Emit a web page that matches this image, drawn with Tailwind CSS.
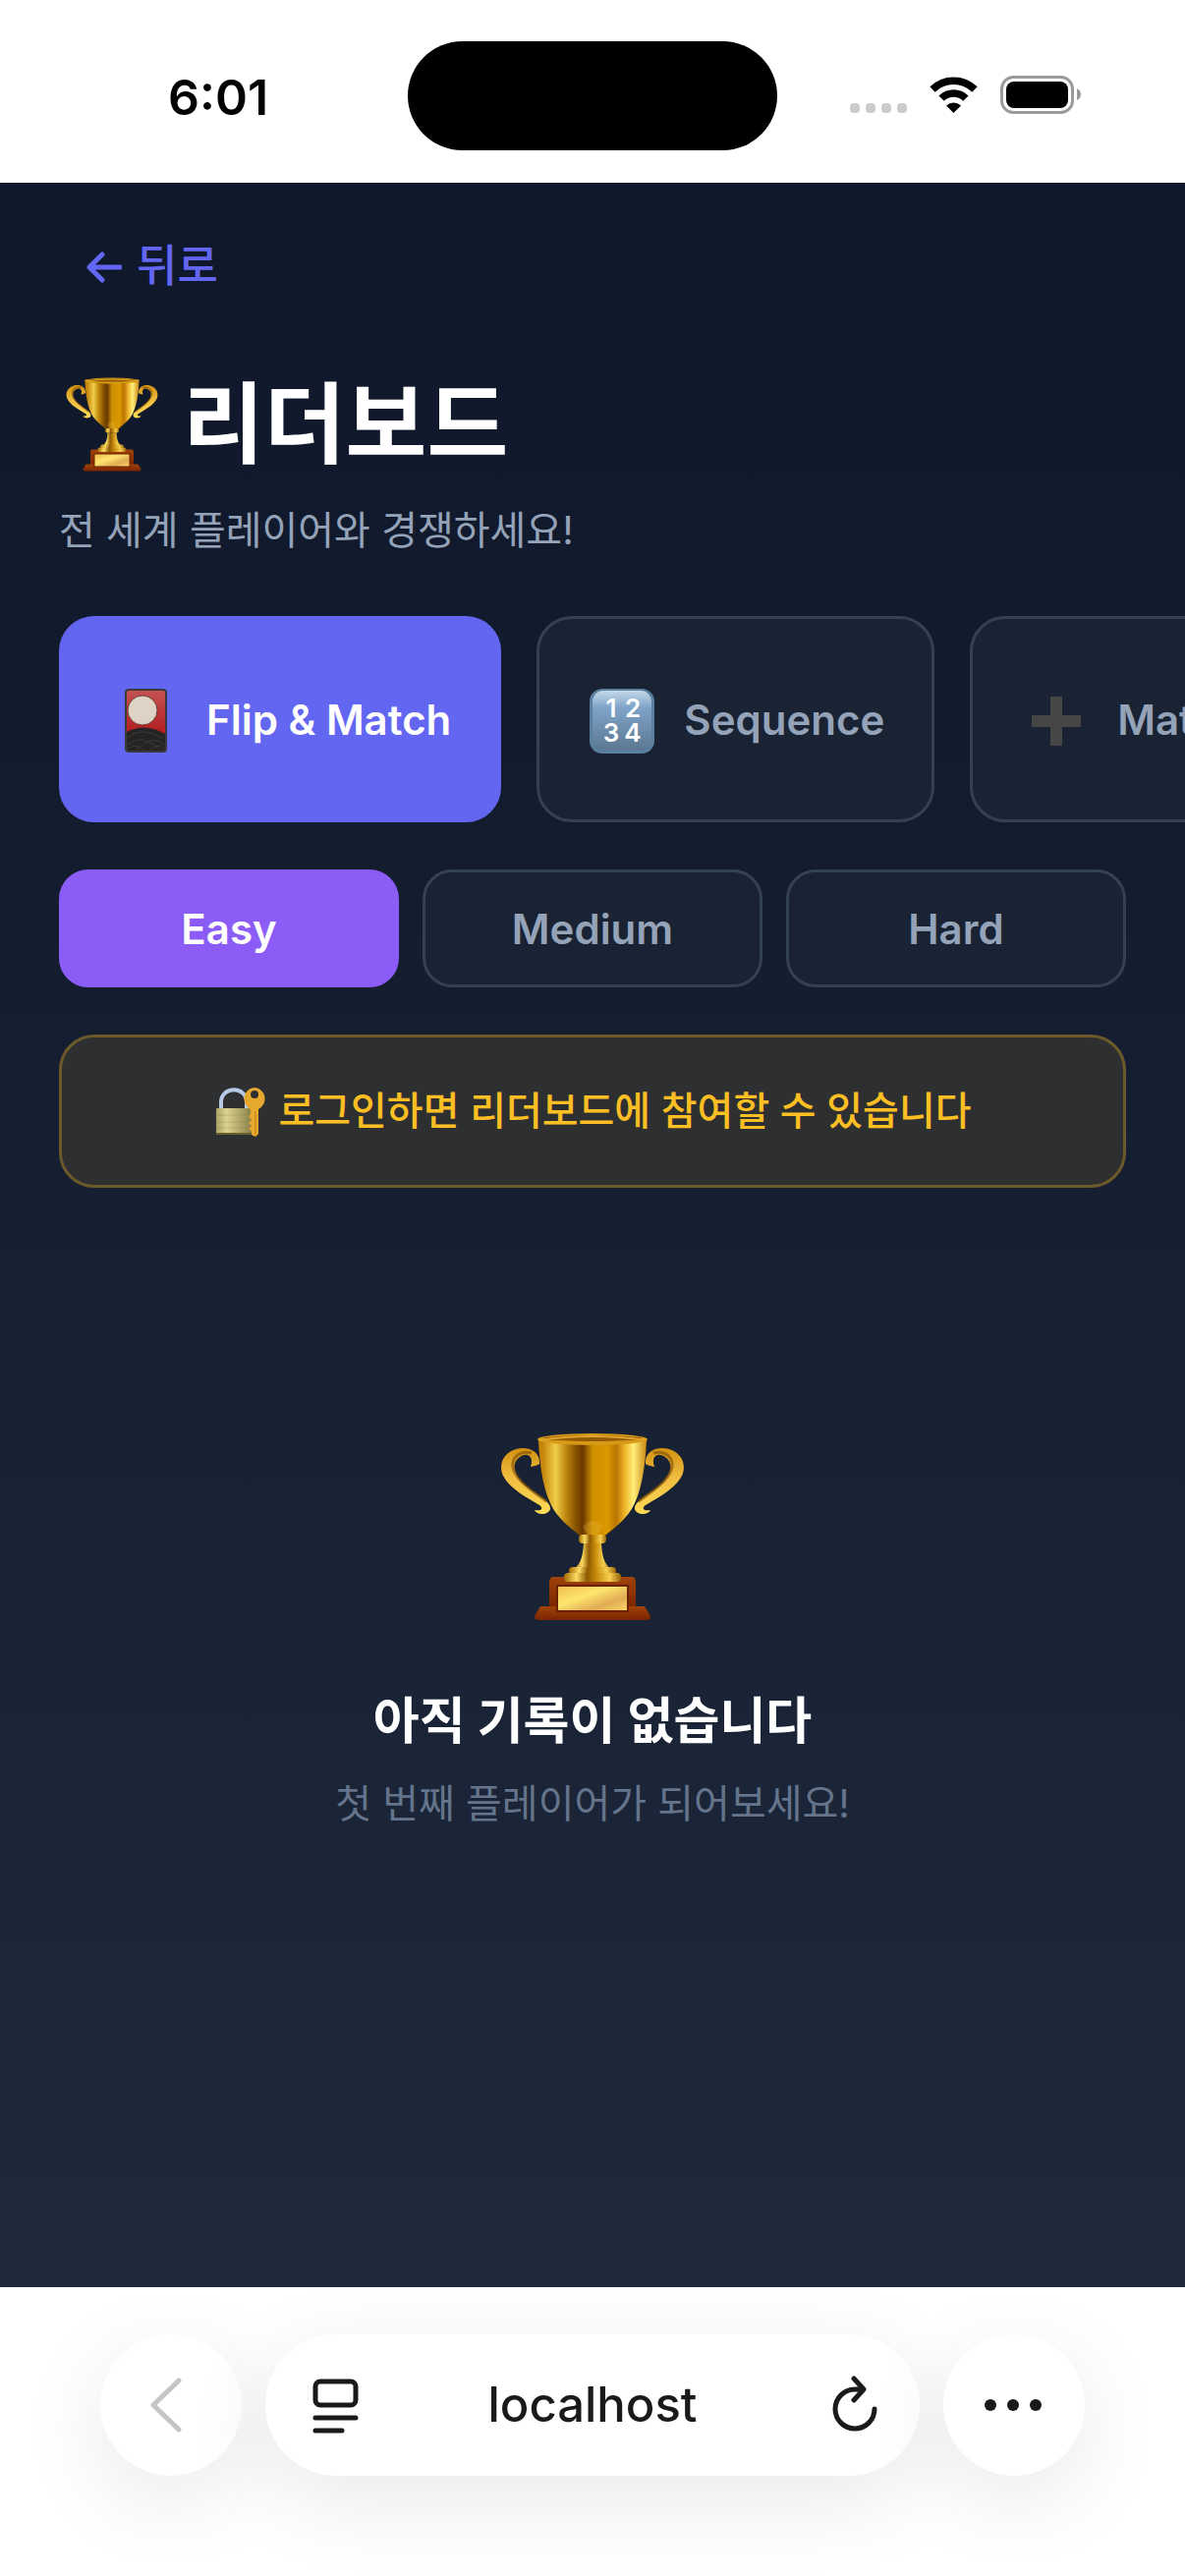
<!DOCTYPE html>
<html lang="ko">
<head>
<meta charset="utf-8">
<meta name="viewport" content="width=device-width, initial-scale=1">
<title>리더보드</title>
<script src="https://cdn.jsdelivr.net/npm/@tailwindcss/browser@4"></script>
</head>
<body class="flex min-h-screen flex-col overflow-x-hidden bg-white font-['Inter','Noto_Sans_CJK_KR',sans-serif]">
<svg class="absolute size-0" aria-hidden="true">
  <defs>
    <linearGradient id="cup" x1="0" x2="1" y1="0" y2="0">
      <stop offset="0" stop-color="#c07c06"/><stop offset=".05" stop-color="#c98a10"/><stop offset=".16" stop-color="#f0cd4a"/><stop offset=".25" stop-color="#c08a10"/><stop offset=".34" stop-color="#8a5500"/><stop offset=".41" stop-color="#6b3800"/><stop offset=".5" stop-color="#cf9000"/><stop offset=".64" stop-color="#da9800"/><stop offset=".72" stop-color="#b87400"/><stop offset=".8" stop-color="#f0b52c"/><stop offset=".88" stop-color="#fff07a"/><stop offset="1" stop-color="#c98512"/>
    </linearGradient>
    <linearGradient id="stem" x1="0" x2="1" y1="0" y2="0">
      <stop offset="0" stop-color="#a66a04"/><stop offset=".22" stop-color="#fbdc62"/><stop offset=".4" stop-color="#8f5a02"/><stop offset=".58" stop-color="#c98d0c"/><stop offset=".8" stop-color="#f6cf50"/><stop offset="1" stop-color="#9a6204"/>
    </linearGradient>
    <linearGradient id="handle" x1="0" x2="0" y1="0" y2="1">
      <stop offset="0" stop-color="#d29210"/><stop offset=".45" stop-color="#f0bc40"/><stop offset="1" stop-color="#ffdc55"/>
    </linearGradient>
    <linearGradient id="wood" x1="0" x2="0" y1="0" y2="1">
      <stop offset="0" stop-color="#a04208"/><stop offset="1" stop-color="#7a2400"/>
    </linearGradient>
    <linearGradient id="plate" x1="0" x2="1" y1="0" y2="1">
      <stop offset="0" stop-color="#eebb4c"/><stop offset=".4" stop-color="#ffe56e"/><stop offset=".7" stop-color="#e0ac55"/><stop offset="1" stop-color="#ffd866"/>
    </linearGradient>
    <symbol id="trophy" viewBox="0 0 186 192">
      <g id="trophy-handle">
        <path d="M39 32C40 18 26 14 15 17C2 21 -3 33 2 44C9 58 28 67 39 74C43 77 42 80 34 79C36 84 48 85 50 78C51 70 36 64 26 55C12 44 10 31 19 25C26 20 34 24 30 35C35 34 38 33 39 32Z" fill="url(#handle)"/>
        <path d="M31 21C18 18 11 26 12 35C14 48 32 60 46 70" fill="none" stroke="#7c4a04" stroke-width="3" opacity=".6"/>
      </g>
      <use href="#trophy-handle" transform="translate(186 0) scale(-1 1)"/>
      <path d="M38 9C40 48 47 74 60 87C67 95 76 101 81 106H105C110 101 119 95 126 87C139 74 146 48 148 9Z" fill="url(#cup)"/>
      <path d="M83 96Q93 84 103 96L98 104H88Z" fill="#f2bf45" opacity=".25"/>
      <ellipse cx="93" cy="7" rx="56" ry="6" fill="#d79a17"/>
      <ellipse cx="93" cy="6" rx="50" ry="3" fill="#925a04"/>
      <path d="M38 8Q93 0 148 8" fill="none" stroke="#e0a52c" stroke-width="2"/>
      <path d="M84 113H102C103 125 104 133 112 139H74C82 133 83 125 84 113Z" fill="url(#stem)"/>
      <rect x="79" y="104" width="28" height="9" rx="4" fill="url(#stem)"/>
      <rect x="69" y="137" width="48" height="8" rx="4" fill="url(#stem)"/>
      <path d="M52 147H134Q137 148 137 153V180H49V153Q49 148 52 147Z" fill="url(#wood)"/>
      <rect x="64" y="143" width="58" height="9" rx="4" fill="url(#stem)"/>
      <path d="M40 177H146L152 187Q152 191 148 191H38Q34 191 34 187Z" fill="url(#wood)"/>
      <path d="M57 156H129V182H57Z" fill="url(#plate)" stroke="#6b2000" stroke-width="2"/>
    </symbol>
  </defs>
</svg>

<header class="grid h-[186px] grid-cols-[1fr_376px_1fr] items-center pb-2" aria-label="상태 표시줄">
  <time class="pl-[171px] pt-5 text-[50px] leading-[60px] font-semibold text-black">6:01</time>
  <div class="mt-4 h-[111px] rounded-full bg-black"></div>
  <svg class="ml-[73px] mt-4 h-[40px] w-[236px]" viewBox="864 78 236 40" aria-label="Wi-Fi, 배터리">
    <g fill="#cbcbcb"><rect x="865" y="106" width="10" height="10" rx="4"/><rect x="881" y="106" width="10" height="10" rx="4"/><rect x="897" y="106" width="10" height="10" rx="4"/><rect x="913" y="106" width="10" height="10" rx="4"/></g>
    <path d="M970.500 116L978 108.500A11 11 0 0 0 963 108.500Z"/>
    <path d="M958.100 101.100A17.500 17.500 0 0 1 982.900 101.100M949 92A30.500 30.500 0 0 1 992 92" fill="none" stroke="#000" stroke-width="7.500"/>
    <rect x="1019.500" y="79.500" width="72" height="36" rx="12" fill="none" stroke="#9b9b9b" stroke-width="3"/>
    <rect x="1024" y="84" width="63" height="27" rx="8"/>
    <path d="M1096 91Q1100 93 1100 97T1096 103Z" fill="#9b9b9b"/>
  </svg>
</header>

<main class="flex grow flex-col bg-linear-to-b from-[#0f172a] to-[#1e293b] px-[60px] pt-[48px]">
  <a href="#" class="flex h-[74px] items-center gap-[15px] self-start px-7 text-[45px] leading-[66px] font-medium text-[#6366f1]">
    <svg class="h-[36px] w-[36px]" viewBox="0 0 36 36" fill="none" stroke="currentColor" stroke-width="5" stroke-linecap="round" stroke-linejoin="round"><path d="M34 19H4M16 6L3 19L16 32"/></svg>
    <span>뒤로</span>
  </a>

  <h1 class="mt-[67px] flex h-[114px] items-center gap-[24px] pl-[6px] text-[90px] leading-[114px] font-bold text-white">
    <svg class="h-[96px] w-[96px]" role="img" aria-label="트로피"><use href="#trophy"/></svg>
    <span>리더보드</span>
  </h1>
  <p class="mt-[21px] text-[40px] leading-[60px] text-[#94a3b8]">전 세계 플레이어와 경쟁하세요!</p>

  <nav class="-mr-[60px] mt-[57px] flex gap-[36px] overflow-hidden text-[42px] font-semibold whitespace-nowrap text-[#94a3b8]" aria-label="게임">
    <button class="flex h-[210px] shrink-0 items-center gap-[27px] rounded-[36px] border-3 border-[#6366f1] bg-[#6366f1] px-[48px] text-white">
      <svg class="h-[72px] w-[72px]" viewBox="0 0 72 72">
        <defs><linearGradient id="red" x1="0" x2="0" y1="0" y2="1"><stop offset="0" stop-color="#c45252"/><stop offset="1" stop-color="#b01418"/></linearGradient></defs>
        <rect x="16" y="5" width="43" height="65" rx="4" fill="#393a3a"/>
        <rect x="18" y="7" width="39" height="50" rx="2" fill="url(#red)"/>
        <circle cx="34" cy="27" r="15" fill="#dfd3c5" stroke="#6c4037"/>
        <path d="M18 49Q37 39 57 51V66Q57 68 55 68H20Q18 68 18 66Z" fill="#252423"/>
        <path d="M18 55Q34 42 55 56M18 62Q34 50 50 66M28 67Q44 51 57 62M18 67Q26 59 36 68M42 67Q48 60 57 66" fill="none" stroke="#3b3a38"/>
      </svg>
      <span>Flip &amp; Match</span>
    </button>
    <button class="flex h-[210px] shrink-0 items-center gap-[27px] rounded-[36px] border-3 border-[#334155] bg-[#192334] px-[48px]">
      <svg class="h-[72px] w-[72px]" viewBox="0 0 72 72">
        <defs><linearGradient id="key" x1="0" x2="0" y1="0" y2="1"><stop offset="0" stop-color="#c5d9ea"/><stop offset=".28" stop-color="#7fa4c9"/><stop offset="1" stop-color="#5b7791"/></linearGradient></defs>
        <rect x="3" y="5" width="66" height="66" rx="13" fill="#5b7f9f"/>
        <rect x="6" y="7" width="60" height="61" rx="11" fill="url(#key)"/>
        <g fill="#fff" font-family="Inter" font-size="26" font-weight="600" text-anchor="middle"><text x="25" y="34">1</text><text x="47" y="34">2</text><text x="25" y="59">3</text><text x="47" y="59">4</text></g>
      </svg>
      <span>Sequence</span>
    </button>
    <button class="flex h-[210px] shrink-0 items-center gap-[27px] rounded-[36px] border-3 border-[#334155] bg-[#192334] px-[48px]">
      <svg class="h-[72px] w-[72px]" viewBox="0 0 72 72"><path d="M31 13H43V32H62V44H43V63H31V44H12V32H31Z" fill="#464646"/></svg>
      <span>Math</span>
    </button>
  </nav>

  <div class="mt-[48px] grid grid-cols-3 gap-6 text-[42px] font-semibold text-[#94a3b8]" role="group" aria-label="난이도">
    <button class="h-[120px] rounded-[30px] border-3 border-[#8b5cf6] bg-[#8b5cf6] text-white">Easy</button>
    <button class="h-[120px] rounded-[30px] border-3 border-[#334155] bg-[#192334]">Medium</button>
    <button class="h-[120px] rounded-[30px] border-3 border-[#334155] bg-[#192334]">Hard</button>
  </div>

  <div class="mt-[48px] flex h-[156px] items-center justify-center gap-[12px] rounded-[36px] border-3 border-[#6d5a2b] bg-[#2e2f30] text-[40px] leading-[60px] font-medium text-[#fbbf24]">
    <svg class="h-[54px] w-[54px]" viewBox="0 0 54 54">
      <defs><linearGradient id="brass" x1="0" x2="1" y1="0" y2="0"><stop offset="0" stop-color="#a9a266"/><stop offset=".3" stop-color="#dcd48f"/><stop offset="1" stop-color="#8a8048"/></linearGradient></defs>
      <path d="M8 26V18C8 1 34 1 34 18V26" fill="none" stroke="#b5c9e4" stroke-width="4"/>
      <rect x="3" y="24" width="36" height="27" rx="1" fill="url(#brass)"/>
      <path d="M3 49H39V51H3Z" fill="#6b5f30"/>
      <path d="M3 31H39M3 38H39M3 44H39" stroke="#8c8650" opacity=".35"/>
      <path fill-rule="evenodd" d="M42 3A11 11.500 0 0 1 46 25V50L43 53L39 51V47L36 45L39 42L36 39L39 36L36 32L38 30V25A11 11.500 0 0 1 42 3ZM42 6A4 4 0 1 0 42.100 14A4 4 0 1 0 42 6Z" fill="#e6a82d"/>
      <path d="M43 27V51" stroke="#c07d12"/>
    </svg>
    <p>로그인하면 리더보드에 참여할 수 있습니다</p>
  </div>

  <section class="flex flex-col items-center pt-[249px] pb-[120px] text-center">
    <svg class="h-[192px] w-[186px]" role="img" aria-label="트로피"><use href="#trophy"/></svg>
    <h2 class="mt-[63px] text-[51px] leading-[78px] font-bold text-white">아직 기록이 없습니다</h2>
    <p class="mt-[15px] text-[40px] leading-[60px] text-[#64748b]">첫 번째 플레이어가 되어보세요!</p>
  </section>
</main>

<footer class="flex h-[294px] items-start gap-6 overflow-hidden px-[102px] pt-[48px] text-[#1a1a1a]">
  <button class="grid size-[144px] shrink-0 place-items-center rounded-full bg-white shadow-[0_24px_90px_rgba(0,0,0,0.09)]" aria-label="이전">
    <svg class="size-[60px]" viewBox="0 0 60 60" fill="none" stroke="#c5c5c7" stroke-width="5" stroke-linecap="round" stroke-linejoin="round"><path d="M38 5L12 30L38 55"/></svg>
  </button>
  <div class="flex h-[144px] grow items-center justify-between rounded-full bg-white pr-[36px] pl-[42px] shadow-[0_24px_90px_rgba(0,0,0,0.09)]">
    <button aria-label="페이지 메뉴"><svg class="h-[60px] w-[54px]" viewBox="0 0 54 60" fill="none" stroke="currentColor" stroke-width="5" stroke-linecap="round"><rect x="9" y="6" width="41" height="24" rx="5"/><path d="M9 43H50M9 56H36"/></svg></button>
    <span class="text-[49px] leading-[60px] font-medium">localhost</span>
    <button aria-label="새로고침"><svg class="size-[60px]" viewBox="0 0 60 60" fill="none" stroke="currentColor" stroke-width="5" stroke-linecap="round" stroke-linejoin="round"><path d="M37 14H30A20 20 0 1 0 50 34M29 3L39 14L29 25"/></svg></button>
  </div>
  <button class="grid size-[144px] shrink-0 place-items-center rounded-full bg-white shadow-[0_24px_90px_rgba(0,0,0,0.09)]" aria-label="더 보기">
    <svg class="size-[60px]" viewBox="0 0 60 60" fill="currentColor"><circle cx="6" cy="30" r="6"/><circle cx="29" cy="30" r="6"/><circle cx="52" cy="30" r="6"/></svg>
  </button>
</footer>
</body>
</html>
